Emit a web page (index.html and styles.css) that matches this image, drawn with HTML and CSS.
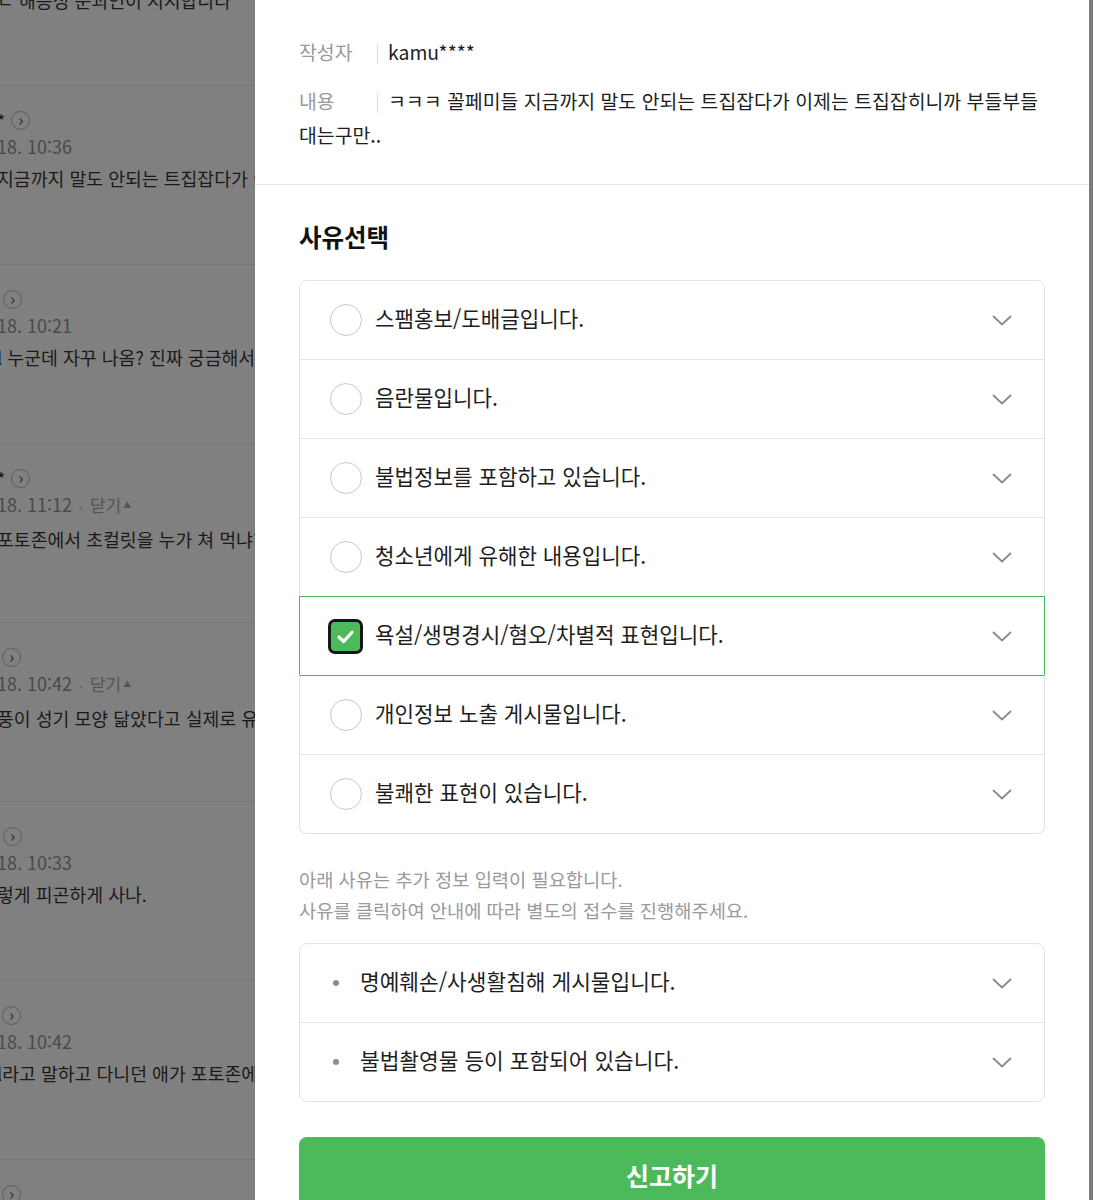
FILE: index.html
```html
<!DOCTYPE html>
<html lang="ko">
<head>
  <meta charset="UTF-8">
  <title>댓글 신고</title>
  <link rel="stylesheet" href="styles.css">
</head>
<body>

  <div class="screen">

    <div class="behind">
      <div class="behind-inner">
        <div class="cmt cmt-first">
          <p class="cmt-text cmt-cut">ㄷ 해응성 운괴인이 지지합니다</p>
        </div>

        <div class="cmt">
          <div class="cmt-nick">*<span class="go">&rsaquo;</span></div>
          <div class="cmt-date">18. 10:36</div>
          <p class="cmt-text">지금까지 말도 안되는 트집잡다가 이제는</p>
        </div>

        <div class="cmt">
          <div class="cmt-nick"><span class="go">&rsaquo;</span></div>
          <div class="cmt-date">18. 10:21</div>
          <p class="cmt-text">l 누군데 자꾸 나옴? 진짜 궁금해서 그래</p>
        </div>

        <div class="cmt">
          <div class="cmt-nick">*<span class="go">&rsaquo;</span></div>
          <div class="cmt-date">18. 11:12 <span class="dot">&bull;</span> <span class="fold">닫기<small>&#9650;</small></span></div>
          <p class="cmt-text">포토존에서 초컬릿을 누가 쳐 먹냐? ㅋㅋ</p>
        </div>

        <div class="cmt">
          <div class="cmt-nick"><span class="go go-left">&rsaquo;</span></div>
          <div class="cmt-date">18. 10:42 <span class="dot">&bull;</span> <span class="fold">닫기<small>&#9650;</small></span></div>
          <p class="cmt-text">풍이 성기 모양 닮았다고 실제로 유통되는</p>
        </div>

        <div class="cmt">
          <div class="cmt-nick"><span class="go">&rsaquo;</span></div>
          <div class="cmt-date">18. 10:33</div>
          <p class="cmt-text">렇게 피곤하게 사나.</p>
        </div>

        <div class="cmt">
          <div class="cmt-nick"><span class="go go-left">&rsaquo;</span></div>
          <div class="cmt-date">18. 10:42</div>
          <p class="cmt-text">l라고 말하고 다니던 애가 포토존에서</p>
        </div>

        <div class="cmt">
          <div class="cmt-nick"><span class="go go-left">&rsaquo;</span></div>
        </div>
      </div>
    </div>

    <div class="sheet">
      <div class="meta">
        <div class="meta-row"><span class="meta-label">작성자</span><span class="bar"></span><span>kamu****</span></div>
        <div class="meta-row"><span class="meta-label">내용</span><span class="bar"></span><span>ㅋㅋㅋ 꼴페미들 지금까지 말도 안되는 트집잡다가 이제는 트집잡히니까 부들부들대는구만..</span></div>
      </div>

      <div class="reasons">
        <h3>사유선택</h3>

        <ul class="reason-box">
          <li class="reason"><span class="radio"></span><span class="reason-text">스팸홍보/도배글입니다.</span><svg class="chev" viewBox="0 0 20 11"><path d="M1 1 L10 9.5 L19 1"/></svg></li>
          <li class="reason"><span class="radio"></span><span class="reason-text">음란물입니다.</span><svg class="chev" viewBox="0 0 20 11"><path d="M1 1 L10 9.5 L19 1"/></svg></li>
          <li class="reason"><span class="radio"></span><span class="reason-text">불법정보를 포함하고 있습니다.</span><svg class="chev" viewBox="0 0 20 11"><path d="M1 1 L10 9.5 L19 1"/></svg></li>
          <li class="reason"><span class="radio"></span><span class="reason-text">청소년에게 유해한 내용입니다.</span><svg class="chev" viewBox="0 0 20 11"><path d="M1 1 L10 9.5 L19 1"/></svg></li>
          <li class="reason selected">
            <span class="checkbox"><svg viewBox="0 0 20 20"><path d="M4.8 10.4 L8.6 14 L15.2 6.6"/></svg></span>
            <span class="reason-text">욕설/생명경시/혐오/차별적 표현입니다.</span>
            <svg class="chev" viewBox="0 0 20 11"><path d="M1 1 L10 9.5 L19 1"/></svg>
          </li>
          <li class="reason"><span class="radio"></span><span class="reason-text">개인정보 노출 게시물입니다.</span><svg class="chev" viewBox="0 0 20 11"><path d="M1 1 L10 9.5 L19 1"/></svg></li>
          <li class="reason"><span class="radio"></span><span class="reason-text">불쾌한 표현이 있습니다.</span><svg class="chev" viewBox="0 0 20 11"><path d="M1 1 L10 9.5 L19 1"/></svg></li>
        </ul>

        <p class="note">아래 사유는 추가 정보 입력이 필요합니다.<br>사유를 클릭하여 안내에 따라 별도의 접수를 진행해주세요.</p>

        <ul class="reason-box">
          <li class="reason reason-link"><span class="bullet"></span><span class="reason-text">명예훼손/사생활침해 게시물입니다.</span><svg class="chev" viewBox="0 0 20 11"><path d="M1 1 L10 9.5 L19 1"/></svg></li>
          <li class="reason reason-link"><span class="bullet"></span><span class="reason-text">불법촬영물 등이 포함되어 있습니다.</span><svg class="chev" viewBox="0 0 20 11"><path d="M1 1 L10 9.5 L19 1"/></svg></li>
        </ul>

        <button class="submit">신고하기</button>
      </div>
    </div>

    <div class="edge"></div>
  </div>

</body>
</html>
```

FILE: styles.css
```css
* {
  box-sizing: border-box;
}

body {
  margin: 0;
  font-family: "Noto Sans CJK KR", "Noto Sans", sans-serif;
  background-color: #808080;
}

.screen {
  display: flex;
  height: 1200px;
  overflow: hidden;
}

/* page behind the dimmed overlay */
.behind {
  width: 255px;
  flex: none;
  overflow: hidden;
  background-color: #808080;
  color: #1a1a1a;
}

.behind-inner {
  margin-left: -3px;
}

.cmt {
  height: 179px;
  border-bottom: 1px solid #767676;
  padding-top: 24px;
  white-space: nowrap;
}

.cmt-first {
  height: 86px;
  padding-top: 0;
  overflow: hidden;
}

.cmt-nick {
  display: flex;
  align-items: center;
  height: 20px;
  font-size: 18px;
  line-height: 20px;
}

.go {
  display: inline-flex;
  align-items: center;
  justify-content: center;
  width: 19px;
  height: 19px;
  margin-left: 6px;
  border: 1px solid #5e5e5e;
  border-radius: 50%;
  font-size: 17px;
  line-height: 1;
  color: #2a2a2a;
  padding-bottom: 3px;
}

.go-left {
  margin-left: 5px;
}

.cmt-date {
  margin-top: 3px;
  font-size: 18px;
  line-height: 26px;
  color: #4a4a4a;
}

.dot {
  color: #6d6d6d;
  font-size: 11px;
  margin: 0 2px;
}

.fold {
  color: #555;
  font-size: 17px;
}

.fold small {
  font-size: 8px;
  vertical-align: 4px;
  margin-left: 2px;
}

.cmt-text {
  margin: 3px 0 0;
  font-size: 18.3px;
  line-height: 32px;
}

.cmt-cut {
  margin-top: -16px;
}

/* report sheet */
.sheet {
  width: 834px;
  flex: none;
  background-color: #fff;
}

.edge {
  flex: 1;
  background-color: #7b7b7b;
}

.meta {
  padding: 35px 44px 32px;
  border-bottom: 1px solid #e6e6e6;
}

.meta-row {
  font-size: 19.4px;
  line-height: 34px;
  color: #1e1e1e;
}

.meta-row + .meta-row {
  margin-top: 15px;
}

.meta-label {
  display: inline-block;
  width: 78px;
  color: #999;
}

.bar {
  display: inline-block;
  width: 1px;
  height: 20px;
  margin-right: 10px;
  vertical-align: -4px;
  background-color: #ddd;
}

.reasons {
  padding: 36px 44px 0;
}

.reasons h3 {
  margin: 0 0 27px;
  font-size: 24.5px;
  line-height: 32px;
  font-weight: 700;
  color: #111;
}

.reason-box {
  list-style: none;
  margin: 0;
  padding: 0;
  border: 1px solid #e2e2e2;
  border-radius: 8px;
}

.reason {
  display: flex;
  align-items: center;
  height: 79px;
  padding: 0 32px 0 30px;
  border-top: 1px solid #e6e6e6;
}

.reason:first-child {
  height: 78px;
  border-top: none;
}

.reason.selected {
  position: relative;
  z-index: 1;
  border-top-color: #4cba5a;
  box-shadow: 1px 0 0 #4cba5a, -1px 0 0 #4cba5a, 0 1px 0 #4cba5a;
}

.radio {
  flex: none;
  width: 32px;
  height: 32px;
  border: 1.5px solid #c8c8c8;
  border-radius: 50%;
}

.checkbox {
  flex: none;
  display: flex;
  align-items: center;
  justify-content: center;
  width: 35px;
  height: 35px;
  margin: 0 -1px 0 -2px;
  border: 3px solid #161616;
  border-radius: 7px;
  background-color: #4cba5a;
}

.checkbox svg {
  width: 25px;
  height: 25px;
  fill: none;
  stroke: #fff;
  stroke-width: 2.6;
  stroke-linecap: round;
  stroke-linejoin: round;
}

.reason-text {
  margin-left: 13px;
  padding-bottom: 5px;
  font-size: 21.2px;
  color: #1e1e1e;
  white-space: nowrap;
}

.chev {
  flex: none;
  width: 20px;
  height: 11px;
  margin-left: auto;
  fill: none;
  stroke: #8a8a8a;
  stroke-width: 1.8;
}

.reason-link {
  padding-left: 33px;
}

.bullet {
  flex: none;
  width: 6px;
  height: 6px;
  border-radius: 50%;
  background-color: #8c8c8c;
}

.reason-link .reason-text {
  margin-left: 21px;
  font-size: 21.4px;
}

.note {
  margin: 29px 0 18px;
  font-size: 18.7px;
  line-height: 31px;
  color: #9a9a9a;
}

.submit {
  display: block;
  width: 100%;
  height: 76px;
  margin-top: 35px;
  border: none;
  border-radius: 8px;
  background-color: #4cba5a;
  color: #fff;
  font-family: inherit;
  font-size: 25px;
  font-weight: 700;
  cursor: pointer;
}
```
